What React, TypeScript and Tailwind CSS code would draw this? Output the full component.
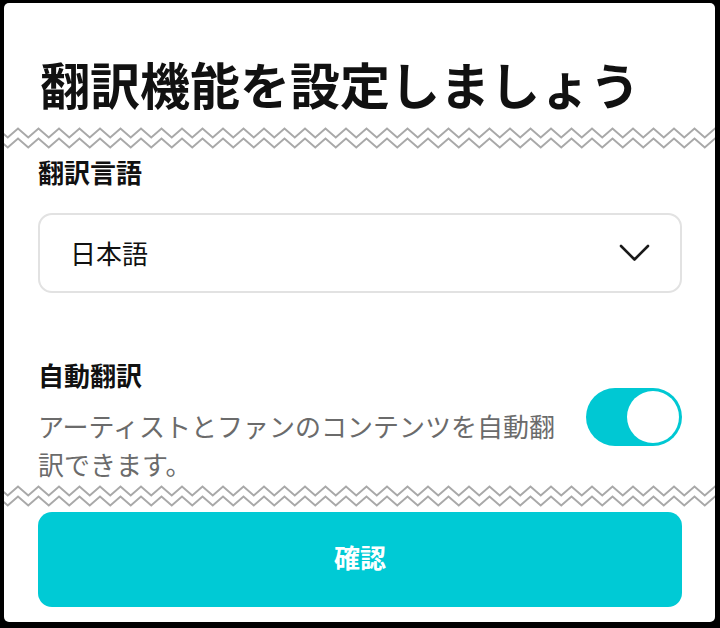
import React from "react";

function Zigzag() {
  const period = 20.5;
  const w = 720;
  const pts = (y0: number) => {
    const p: string[] = [];
    for (let i = -2; i * period < w + period; i++) {
      const x = i * period + 14;
      p.push(`${x - period / 2},${y0 + 9}`);
      p.push(`${x},${y0}`);
    }
    return p.join(" ");
  };
  return (
    <svg width="100%" height="22" viewBox="0 0 711 22" preserveAspectRatio="none" className="block">
      <polyline points={pts(1.5)} fill="none" stroke="#a9a9a9" strokeWidth="2" />
      <polyline points={pts(11.5)} fill="none" stroke="#a9a9a9" strokeWidth="2" />
    </svg>
  );
}

export default function App() {
  return (
    <div
      className="w-[720px] h-[628px] bg-black pt-[3px] pl-[4px] pr-[5px] pb-[6px]"
      style={{ fontFamily: '"Noto Sans CJK JP", "Noto Sans", sans-serif' }}
    >
      <div className="w-full h-full bg-white rounded-[5px] flex flex-col overflow-hidden">
        <div className="pt-[55px] pl-[36px] text-[50px] leading-[50px] font-bold text-[#111]">
          翻訳機能を設定しましょう
        </div>
        <div className="mt-[19px]">
          <Zigzag />
        </div>
        <div className="pl-[34px] pr-[33px] flex flex-col">
          <div className="mt-[10px] text-[26px] leading-[26px] font-bold text-[#111]">翻訳言語</div>
          <div className="mt-[28px] h-[80px] rounded-[14px] border-2 border-[#e2e2e2] flex items-center justify-between pl-[30px] pr-[30px]">
            <span className="text-[26px] leading-[26px] text-[#111]">日本語</span>
            <svg width="31" height="18" viewBox="0 0 31 18">
              <polyline points="2,2 15.5,15.5 29,2" fill="none" stroke="#1a1a1a" strokeWidth="2.6" strokeLinecap="round" strokeLinejoin="round" />
            </svg>
          </div>
          <div className="mt-[69px] text-[26px] leading-[26px] font-bold text-[#111]">自動翻訳</div>
          <div className="flex items-start gap-[26px]">
            <p className="flex-1 mt-[19px] text-[26px] leading-[38px] text-[#6b6b6b]">
              アーティストとファンのコンテンツを自動翻訳できます。
            </p>
            <div className="w-[96px] h-[58px] rounded-full bg-[#00c8d3] flex items-center justify-end p-[3px] shrink-0">
              <div className="w-[52px] h-[52px] rounded-full bg-white" />
            </div>
          </div>
        </div>
        <div className="mt-[2px]">
          <Zigzag />
        </div>
        <div className="pl-[34px] pr-[33px]">
          <button className="mt-[5px] w-full h-[95px] rounded-[14px] bg-[#00cad5] text-white text-[26px] font-bold flex items-center justify-center pb-[6px]">
            確認
          </button>
        </div>
      </div>
    </div>
  );
}
